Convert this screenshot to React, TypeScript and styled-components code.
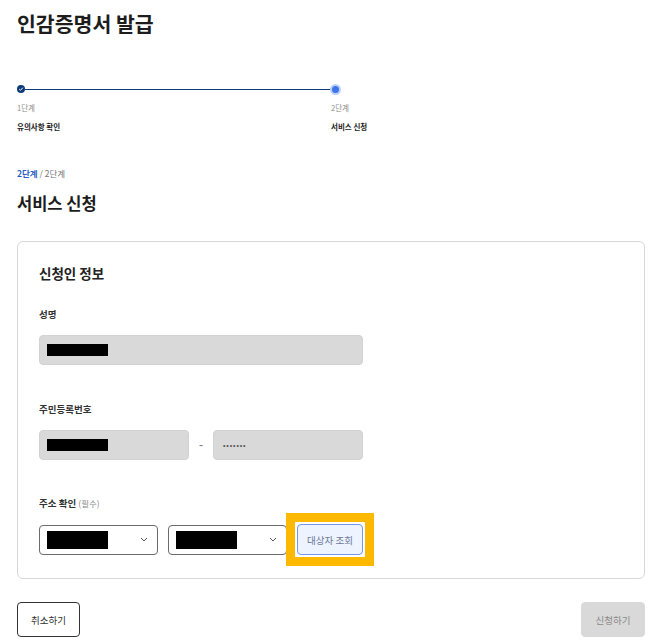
import styled, { createGlobalStyle } from "styled-components";

const GlobalStyle = createGlobalStyle`
  html, body {
    margin: 0;
    padding: 0;
    background: #fff;
  }
  body {
    font-family: "Noto Sans CJK KR", "Noto Sans", sans-serif;
    color: #222;
  }
`;

const Page = styled.div`
  padding: 10px 10px 8px 17px;
  width: 628px;
`;

const Title = styled.h1`
  margin: 0;
  font-size: 20.5px;
  line-height: 26px;
  font-weight: 700;
  color: #1d1d1d;
`;

const Stepper = styled.div`
  display: flex;
  margin-top: 48px;
`;

const Step = styled.div<{ $width?: number }>`
  display: flex;
  flex-direction: column;
  flex: ${(p) => (p.$width ? `0 0 ${p.$width}px` : "1")};
`;

const Track = styled.div`
  display: flex;
  align-items: center;
  height: 10px;
`;

const DoneDot = styled.span`
  display: flex;
  align-items: center;
  justify-content: center;
  width: 8px;
  height: 8px;
  border-radius: 50%;
  background: #0d3b78;
`;

const CurrentDot = styled.span`
  width: 7px;
  height: 7px;
  border-radius: 50%;
  background: #3f74ea;
  border: 2px solid #bcd1f8;
  margin-left: -1px;
`;

const Line = styled.span`
  flex: 1;
  height: 1px;
  background: #0d3b78;
`;

const StepNo = styled.div`
  margin-top: 8px;
  font-size: 7.5px;
  line-height: 12px;
  color: #8a8a8a;
`;

const StepName = styled.div`
  margin-top: 6px;
  font-size: 7.5px;
  line-height: 13px;
  font-weight: 700;
  color: #222;
`;

const Crumb = styled.div`
  margin-top: 33px;
  font-size: 8.5px;
  line-height: 14px;
  color: #777;
`;

const CrumbNow = styled.span`
  color: #2c5fc4;
  font-weight: 700;
`;

const SectionTitle = styled.h2`
  margin: 12px 0 0;
  font-size: 16.5px;
  line-height: 22px;
  font-weight: 700;
  color: #1d1d1d;
`;

const Card = styled.section`
  margin-top: 27px;
  border: 1px solid #d8d8d8;
  border-radius: 6px;
  padding: 21px 21px 23px;
`;

const CardTitle = styled.h3`
  margin: 0;
  font-size: 13.5px;
  line-height: 20px;
  font-weight: 700;
  color: #222;
`;

const Field = styled.div<{ $gap: number }>`
  margin-top: ${(p) => p.$gap}px;
`;

const Label = styled.div`
  font-size: 9.5px;
  line-height: 14px;
  font-weight: 700;
  color: #333;
`;

const Optional = styled.span`
  font-weight: 400;
  font-size: 8.5px;
  color: #888;
`;

const Row = styled.div`
  display: flex;
  align-items: center;
  margin-top: 14px;
`;

const ReadOnlyBox = styled.div<{ $width: number }>`
  display: flex;
  align-items: center;
  box-sizing: border-box;
  width: ${(p) => p.$width}px;
  height: 30px;
  padding: 0 7px;
  background: #d9d9d9;
  border: 1px solid #d2d2d2;
  border-radius: 4px;
`;

const Redact = styled.span<{ $h: number }>`
  display: block;
  width: 61px;
  height: ${(p) => p.$h}px;
  background: #000;
`;

const Dash = styled.span`
  width: 24px;
  text-align: center;
  font-family: "Liberation Sans", sans-serif;
  font-size: 12px;
  color: #777;
`;

const Masked = styled.span`
  margin-left: 2px;
  font-family: "Liberation Sans", sans-serif;
  font-size: 7px;
  letter-spacing: 0.9px;
  color: #555;
`;

const Select = styled.div`
  display: flex;
  align-items: center;
  justify-content: space-between;
  box-sizing: border-box;
  width: 119px;
  height: 30px;
  padding: 0 9px 0 7px;
  margin-right: 10px;
  border: 1px solid #6b6b6b;
  border-radius: 4px;
  background: #fff;
`;

const LookupButton = styled.button`
  position: relative;
  width: 66px;
  height: 31px;
  padding: 0;
  border: 1px solid #6f98e6;
  border-radius: 4px;
  background: #edf3ff;
  color: #6b7896;
  font-family: inherit;
  font-size: 9.5px;

  &::after {
    content: "";
    position: absolute;
    inset: -12px;
    border: 9px solid #fdb900;
    pointer-events: none;
  }
`;

const Footer = styled.div`
  display: flex;
  justify-content: space-between;
  margin-top: 23px;
`;

const FooterButton = styled.button<{ $primary?: boolean }>`
  width: ${(p) => (p.$primary ? 64 : 63)}px;
  height: 35px;
  padding: 0;
  border-radius: 4px;
  font-family: inherit;
  font-size: 9.5px;
  border: 1px solid ${(p) => (p.$primary ? "#d9d9d9" : "#333")};
  background: ${(p) => (p.$primary ? "#d9d9d9" : "#fff")};
  color: ${(p) => (p.$primary ? "#8a8a8a" : "#333")};
`;

const Check = () => (
  <svg width="6" height="6" viewBox="0 0 6 6">
    <path d="M1.2 3.1 L2.5 4.3 L4.8 1.7" fill="none" stroke="#fff" strokeWidth="1" />
  </svg>
);

const Chevron = () => (
  <svg width="8" height="5" viewBox="0 0 8 5">
    <path d="M1 1 L4 4 L7 1" fill="none" stroke="#555" strokeWidth="1" />
  </svg>
);

const App = () => {
  return (
    <Page>
      <GlobalStyle />
      <Title>인감증명서 발급</Title>

      <Stepper>
        <Step $width={314}>
          <Track>
            <DoneDot>
              <Check />
            </DoneDot>
            <Line />
          </Track>
          <StepNo>1단계</StepNo>
          <StepName>유의사항 확인</StepName>
        </Step>
        <Step>
          <Track>
            <CurrentDot />
          </Track>
          <StepNo>2단계</StepNo>
          <StepName>서비스 신청</StepName>
        </Step>
      </Stepper>

      <Crumb>
        <CrumbNow>2단계</CrumbNow> / 2단계
      </Crumb>
      <SectionTitle>서비스 신청</SectionTitle>

      <Card>
        <CardTitle>신청인 정보</CardTitle>

        <Field $gap={24}>
          <Label>성명</Label>
          <Row>
            <ReadOnlyBox $width={324}>
              <Redact $h={12} />
            </ReadOnlyBox>
          </Row>
        </Field>

        <Field $gap={37}>
          <Label>주민등록번호</Label>
          <Row>
            <ReadOnlyBox $width={150}>
              <Redact $h={12} />
            </ReadOnlyBox>
            <Dash>-</Dash>
            <ReadOnlyBox $width={150}>
              <Masked>•••••••</Masked>
            </ReadOnlyBox>
          </Row>
        </Field>

        <Field $gap={36}>
          <Label>
            주소 확인 <Optional>(필수)</Optional>
          </Label>
          <Row>
            <Select>
              <Redact $h={18} />
              <Chevron />
            </Select>
            <Select>
              <Redact $h={18} />
              <Chevron />
            </Select>
            <LookupButton>대상자 조회</LookupButton>
          </Row>
        </Field>
      </Card>

      <Footer>
        <FooterButton>취소하기</FooterButton>
        <FooterButton $primary>신청하기</FooterButton>
      </Footer>
    </Page>
  );
};

export default App;
